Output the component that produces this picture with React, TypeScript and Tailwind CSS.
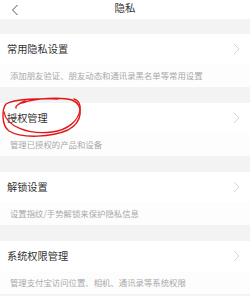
import React from "react";

const sections = [
  { title: "常用隐私设置", desc: "添加朋友验证、朋友动态和通讯录黑名单等常用设置" },
  { title: "授权管理", desc: "管理已授权的产品和设备" },
  { title: "解锁设置", desc: "设置指纹/手势解锁来保护隐私信息" },
  { title: "系统权限管理", desc: "管理支付宝访问位置、相机、通讯录等系统权限" },
];

function Chevron() {
  return (
    <svg width="7" height="12" viewBox="0 0 7 12" className="mr-[10px]">
      <path d="M1 1 L6 6 L1 11" fill="none" stroke="#cfcfcf" strokeWidth="0.9" />
    </svg>
  );
}

export default function App() {
  return (
    <div
      className="relative w-[250px] h-[296px] overflow-hidden bg-[#f3f3f3]"
      style={{ fontFamily: '"Noto Sans CJK SC", "Noto Sans", sans-serif' }}
    >
      <div className="h-[19px] bg-white flex items-center relative">
        <svg width="8" height="12" viewBox="0 0 8 12" className="ml-[11px]">
          <path d="M6.5 1 L1.5 6 L6.5 11" fill="none" stroke="#555" strokeWidth="1" />
        </svg>
        <div className="absolute left-0 right-0 top-0 h-[17px] flex items-center justify-center text-[10.5px] text-[#333] leading-none">
          隐私
        </div>
      </div>
      <div className="flex flex-col gap-[16px] pt-[15px]">
        {sections.map((s) => (
          <div key={s.title} className="flex flex-col">
            <div className="h-[30px] bg-white flex items-center justify-between">
              <span className="ml-[7px] text-[10.2px] text-[#333] leading-none">{s.title}</span>
              <Chevron />
            </div>
            <div className="h-[23px] bg-[#fdfdfd] flex items-center">
              <span className="ml-[10px] text-[8.4px] text-[#a8a8a8] leading-none whitespace-nowrap">
                {s.desc}
              </span>
            </div>
          </div>
        ))}
      </div>
      <svg
        className="absolute left-0 top-0 pointer-events-none"
        width="250"
        height="296"
        viewBox="0 0 250 296"
      >
        <path
          d="M25 101 C 20 103, 15 106, 16 108 M22 103 C 35 98, 62 97, 72 100 C 84 105, 83 122, 68 130 C 52 137, 22 139, 9 131 C 1 125, 2 109, 6 104 C 14 99, 40 98, 58 99"
          fill="none"
          stroke="#e11717"
          strokeWidth="1.4"
          strokeLinecap="round"
        />
        <path
          d="M4 112 C 6 126, 28 135, 52 132 C 68 130, 78 121, 80 110 C 81 104, 78 100, 74 99"
          fill="none"
          stroke="#e11717"
          strokeWidth="1.3"
          strokeLinecap="round"
        />
      </svg>
    </div>
  );
}
